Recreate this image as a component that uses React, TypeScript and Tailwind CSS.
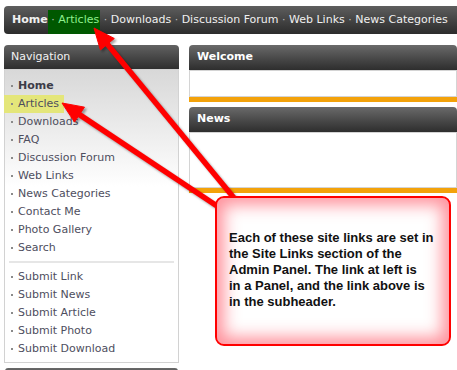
import React from "react";

// nav links in the side panel
const mainLinks = [
	"Home",
	"Articles",
	"Downloads",
	"FAQ",
	"Discussion Forum",
	"Web Links",
	"News Categories",
	"Contact Me",
	"Photo Gallery",
	"Search",
];

const submitLinks = [
	"Submit Link",
	"Submit News",
	"Submit Article",
	"Submit Photo",
	"Submit Download",
];

const topLinks = ["Downloads", "Discussion Forum", "Web Links", "News Categories"];

// callout text, broken as in the screenshot
const noteLines = [
	"Each of these site links are set in",
	"the Site Links section of the",
	"Admin Panel. The link at left is",
	"in a Panel, and the link above is",
	"in the subheader.",
];

// arrow geometry, tail -> tip
function arrowParts(tx: number, ty: number, px: number, py: number) {
	const dx = px - tx;
	const dy = py - ty;
	const len = Math.sqrt(dx * dx + dy * dy);
	const ux = dx / len;
	const uy = dy / len;
	const bx = px - ux * 21;
	const by = py - uy * 21;
	const w = 9;
	return {
		end: { x: px - ux * 16, y: py - uy * 16 },
		head: `${px},${py} ${bx - uy * w},${by + ux * w} ${bx + uy * w},${by - ux * w}`,
	};
}

const arrows = [
	{ tx: 234, ty: 198, px: 94, py: 28 },
	{ tx: 217, ty: 206, px: 62, py: 103 },
];

const NavItem = ({ label, bold, active }: { label: string; bold?: boolean; active?: boolean }) => (
	<li
		className={`flex items-center h-[18px] pl-[7px] -ml-px w-[60px] whitespace-nowrap ${
			active ? "bg-[#e4e67a]" : ""
		}`}
	>
		<span className="w-[2px] h-[2px] bg-[#8a8a8a] mr-[5px] shrink-0" />
		<span className={bold ? "font-bold text-[#3c3c48]" : "text-[#4e4e5e]"}>{label}</span>
	</li>
);

const Panel = ({ title, bodyHeight }: { title: string; bodyHeight: string }) => (
	<div>
		<div className="h-[25px] rounded-t-[4px] bg-gradient-to-b from-[#6a6a6a] to-[#2e2e2e] flex items-center pl-[8px] text-white font-bold text-[11px]">
			{title}
		</div>
		<div className={`${bodyHeight} border border-[#d4d4d4] bg-white`} />
		<div className="h-[5px] bg-[#f3a20a]" />
	</div>
);

export default function App() {
	return (
		<div className="relative w-[457px] h-[370px] overflow-hidden bg-white font-['DejaVu_Sans',Verdana,sans-serif] text-[11px]">
			{/* subheader */}
			<div className="ml-[4px] mt-[6px] h-[28px] rounded-l-[4px] bg-gradient-to-b from-[#5e5e5e] to-[#2c2c2c] flex items-center pl-[8px] text-[#f0f0f0] whitespace-nowrap">
				<span className="font-bold">Home</span>
				<span className="flex items-center h-[24px] mt-[3px] bg-[#005800] pr-[1px]">
					<span className="px-[3.5px] pb-[3px] text-[#bbbbbb]">·</span>
					<span className="pb-[3px] text-[#8ef08e]">Articles</span>
				</span>
				{topLinks.map((l) => (
					<span key={l} className="flex items-center">
						<span className="px-[3.5px] text-[#bbbbbb]">·</span>
						<span>{l}</span>
					</span>
				))}
			</div>

			<div className="flex mt-[11px]">
				{/* left panel */}
				<div className="ml-[4px] w-[175px] shrink-0">
					<div className="h-[24px] rounded-t-[4px] bg-gradient-to-b from-[#626262] to-[#2e2e2e] flex items-center pl-[7px] text-[#f2f2f2]">
						Navigation
					</div>
					<div className="h-[294px] border border-[#d2d2d2] bg-gradient-to-b from-[#d8d8d8] via-white via-[40%] to-white pt-[7px]">
						<ul>
							{mainLinks.map((l, i) => (
								<NavItem key={l} label={l} bold={i === 0} active={i === 1} />
							))}
						</ul>
						<div className="h-[2px] bg-[#e6e6e6] mx-[4px] mt-[4px] mb-[5px]" />
						<ul>
							{submitLinks.map((l) => (
								<NavItem key={l} label={l} />
							))}
						</ul>
					</div>
					<div className="mt-[5px] mx-px h-[10px] rounded-t-[3px] bg-gradient-to-b from-[#6a6a6a] to-[#3a3a3a]" />
				</div>

				{/* center */}
				<div className="ml-[10px] flex-1 flex flex-col gap-[5px]">
					<Panel title="Welcome" bodyHeight="h-[27px]" />
					<Panel title="News" bodyHeight="h-[56px]" />
				</div>
			</div>

			{/* annotation */}
			<svg
				className="absolute left-0 top-0 drop-shadow-[2px_2px_1px_rgba(0,0,0,0.35)]"
				width={457}
				height={370}
			>
				{arrows.map((a, i) => {
					const p = arrowParts(a.tx, a.ty, a.px, a.py);
					return (
						<g key={i} fill="#ff0000" stroke="#ff0000">
							<line x1={a.tx} y1={a.ty} x2={p.end.x} y2={p.end.y} strokeWidth={5.5} />
							<polygon points={p.head} strokeWidth={1} strokeLinejoin="miter" />
						</g>
					);
				})}
			</svg>

			<div className="absolute left-[215px] top-[196px] w-[236px] h-[150px] rounded-[9px] border-2 border-[#ff0000] bg-white shadow-[inset_0_0_16px_7px_rgba(255,40,60,0.5)] flex items-center pl-[12px]">
				<p className="whitespace-nowrap text-[13px] leading-[16px] font-bold text-[#111] font-['Liberation_Sans',Arial,sans-serif] -mt-[2px]">
					{noteLines.map((t, i) => (
						<React.Fragment key={i}>
							{t}
							{i < noteLines.length - 1 && <br />}
						</React.Fragment>
					))}
				</p>
			</div>
		</div>
	);
}
